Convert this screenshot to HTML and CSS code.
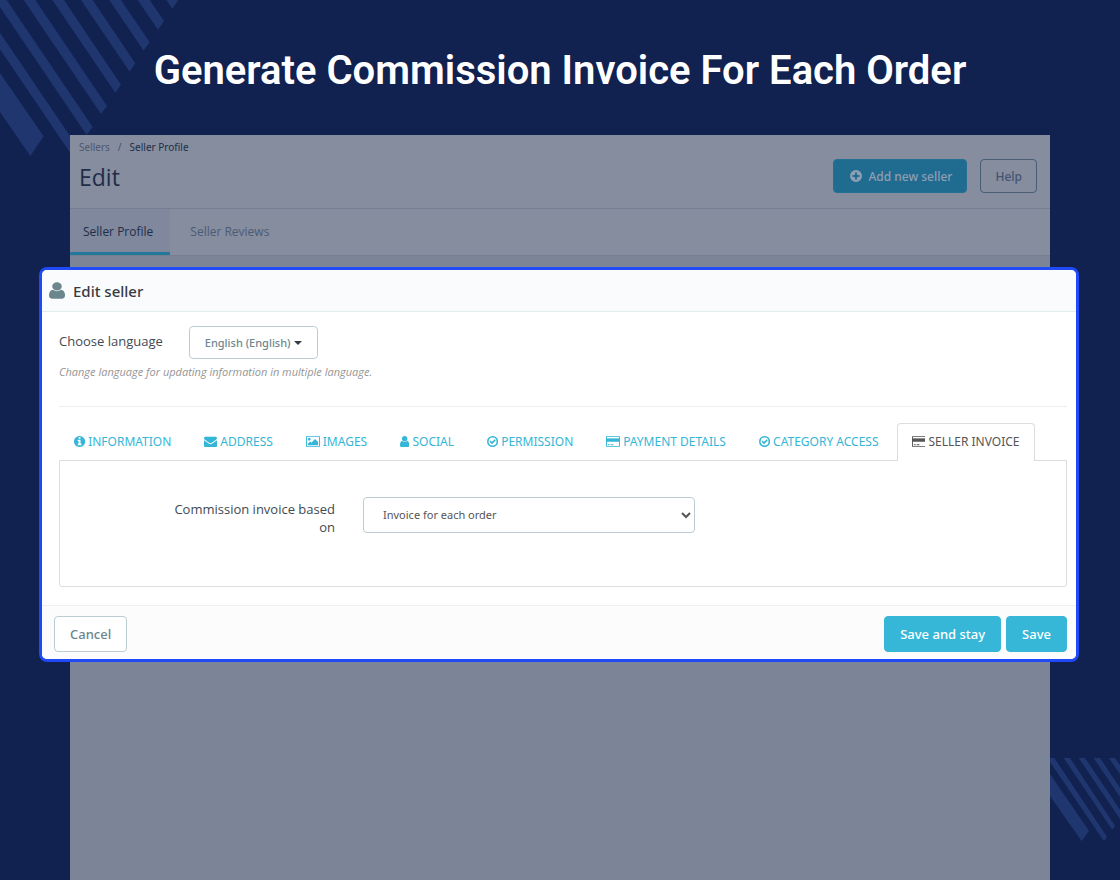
FILE: index.html
```html
<!DOCTYPE html>
<html lang="en">
  <head>
    <meta charset="utf-8">
    <title>Generate Commission Invoice For Each Order</title>
    <link rel="stylesheet" href="styles.css">
  </head>
  <body>
    <!-- corner stripes -->
    <svg class="stripes stripes-top" viewBox="0 0 540 480" aria-hidden="true">
      <path d="M0 219 131 409 91 468 0 336zM0 98 235 445 217 468 0 148zM0 0H20L278 381 260 405 0 21zM71 0H106L321 318 303 342zM157 0H192L363 254 346 278zM243 0H278L406 190 389 215zM328 0H363L449 127 431 152zM413 0H449L492 63 474 89zM499 0H535L517 26z"/>
    </svg>
    <svg class="stripes stripes-bottom" viewBox="0 0 210 255" aria-hidden="true">
      <path d="M0 48 117 218 95 250 0 114zM0 0H13L171 236 162 250 0 12zM41 0H60L195 203 187 216zM86 0H105L210 155V183zM131 0H150L210 89V117zM177 0H195L210 22V49z"/>
    </svg>

    <h1>Generate Commission Invoice For Each Order</h1>

    <main class="stage">
      <div class="page">
        <header class="page-head">
          <div>
            <nav class="breadcrumb">
              <a href="#">Sellers</a><span>/</span><a href="#" class="current">Seller Profile</a>
            </nav>
            <h2>Edit</h2>
          </div>
          <div class="page-actions">
            <button type="button" class="btn-add">
              <svg class="icon-plus" viewBox="0 0 12 12" aria-hidden="true">
                <path fill-rule="evenodd" d="M6 0a6 6 0 1 1 0 12a6 6 0 1 1 0-12zM5 2.500V5H2.500V7H5V9.500H7V7H9.500V5H7V2.500z"/>
              </svg>
              Add new seller
            </button>
            <button type="button" class="btn-help">Help</button>
          </div>
        </header>
        <nav class="page-tabs">
          <a href="#" class="active">Seller Profile</a>
          <a href="#">Seller Reviews</a>
        </nav>
      </div>

      <form class="modal">
        <div class="modal-head">
          <svg class="icon-head" viewBox="256 0 1280 1792" preserveAspectRatio="none" aria-hidden="true"><use href="#user"/></svg>
          <h3>Edit seller</h3>
        </div>

        <div class="modal-body">
          <div class="language">
            <label for="language">Choose language</label>
            <button type="button" id="language">English (English)<span class="caret"></span></button>
          </div>
          <p class="hint">Change language for updating information in multiple language.</p>
          <hr>

          <nav class="tabs">
            <a href="#">
              <svg viewBox="128 0 1536 1792" aria-hidden="true"><path d="M1152 1376v-160q0-14-9-23t-23-9h-96v-512q0-14-9-23t-23-9h-320q-14 0-23 9t-9 23v160q0 14 9 23t23 9h96v320h-96q-14 0-23 9t-9 23v160q0 14 9 23t23 9h448q14 0 23-9t9-23zm-128-896v-160q0-14-9-23t-23-9h-192q-14 0-23 9t-9 23v160q0 14 9 23t23 9h192q14 0 23-9t9-23zm640 416q0 209-103 385.500t-279.500 279.500-385.500 103-385.500-103-279.500-279.500-103-385.500 103-385.500 279.500-279.500 385.500-103 385.500 103 279.500 279.500 103 385.500z"/></svg>
              INFORMATION
            </a>
            <a href="#">
              <svg viewBox="0 0 1792 1792" aria-hidden="true"><path d="M1792 710v794q0 66-47 113t-113 47h-1472q-66 0-113-47t-47-113v-794q44 49 101 87 362 246 497 345 57 42 92.500 65.500t94.500 48 110 24.500h2q51 0 110-24.500t94.500-48 92.500-65.500q170-123 498-345 57-39 100-87zm0-294q0 79-49 151t-122 123q-376 261-468 325-10 7-42.500 31t-54 38.500-52 32.500-57.500 27-50 9h-2q-23 0-50-9t-57.500-27-52-32.500-54-38.500-42.500-31q-91-64-262-182.500t-205-142.500q-62-42-117-115.500t-55-136.500q0-78 41.500-130t118.500-52h1472q65 0 112.500 47t47.500 113z"/></svg>
              ADDRESS
            </a>
            <a href="#">
              <svg viewBox="64 0 1920 1792" aria-hidden="true"><path d="M704 576q0 80-56 136t-136 56-136-56-56-136 56-136 136-56 136 56 56 136zm1024 384v448h-1408v-192l320-320 160 160 512-512zm96-704h-1600q-13 0-22.500 9.500t-9.500 22.500v1216q0 13 9.500 22.500t22.500 9.500h1600q13 0 22.500-9.500t9.500-22.500v-1216q0-13-9.500-22.500t-22.500-9.500zm160 32v1216q0 66-47 113t-113 47h-1600q-66 0-113-47t-47-113v-1216q0-66 47-113t113-47h1600q66 0 113 47t47 113z"/></svg>
              IMAGES
            </a>
            <a href="#">
              <svg viewBox="256 0 1280 1792" aria-hidden="true"><path id="user" d="M1536 1399q0 109-62.500 187t-150.500 78h-854q-88 0-150.500-78t-62.500-187q0-85 8.500-160.500t31.500-152 58.500-131 94-89 134.500-34.500q131 128 313 128t313-128q76 0 134.500 34.500t94 89 58.500 131 31.500 152 8.500 160.500zm-256-887q0 159-112.500 271.500t-271.500 112.500-271.500-112.500-112.500-271.500 112.500-271.500 271.500-112.500 271.500 112.500 112.500 271.500z"/></svg>
              SOCIAL
            </a>
            <a href="#">
              <svg viewBox="128 0 1536 1792" aria-hidden="true"><g id="check" fill="none" stroke="currentColor" stroke-width="224"><circle cx="896" cy="896" r="656"/><path d="M560 850 820 1110 1260 670"/></g></svg>
              PERMISSION
            </a>
            <a href="#">
              <svg viewBox="0 0 1920 1792" aria-hidden="true"><path id="card" d="M1760 128q66 0 113 47t47 113v1216q0 66-47 113t-113 47h-1600q-66 0-113-47t-47-113v-1216q0-66 47-113t113-47h1600zm-1600 128q-13 0-22.500 9.500t-9.500 22.500v224h1664v-224q0-13-9.500-22.500t-22.500-9.500h-1600zm1600 1280q13 0 22.500-9.500t9.500-22.500v-608h-1664v608q0 13 9.500 22.500t22.500 9.500h1600zm-1504-128v-128h256v128h-256zm384 0v-128h384v128h-384z"/><path id="stripe" d="M64 480H1856V896H64z"/></svg>
              PAYMENT DETAILS
            </a>
            <a href="#">
              <svg viewBox="128 0 1536 1792" aria-hidden="true"><use href="#check"/></svg>
              CATEGORY ACCESS
            </a>
            <a href="#" class="active">
              <svg viewBox="0 0 1920 1792" aria-hidden="true"><use href="#card"/><use href="#stripe"/></svg>
              SELLER INVOICE
            </a>
          </nav>

          <div class="tab-content">
            <label for="invoice">Commission invoice based on</label>
            <select id="invoice">
              <option>Invoice for each order</option>
            </select>
          </div>
        </div>

        <div class="modal-foot">
          <button type="button" class="btn-cancel">Cancel</button>
          <button type="submit" class="btn-save">Save and stay</button>
          <button type="submit" class="btn-save">Save</button>
        </div>
      </form>
    </main>
  </body>
</html>
```

FILE: styles.css
```css
* {
  box-sizing: border-box;
}
body {
  margin: 0;
  min-height: 100vh;
  display: flex;
  flex-direction: column;
  position: relative;
  background-color: #112150;
  font-family: "Open Sans", sans-serif;
}
h1, h2, h3, p {
  margin: 0;
}
a {
  text-decoration: none;
}
button, select, h3, .tabs, .breadcrumb {
  font-family: "Noto Sans", sans-serif;
}
button, select {
  border-radius: 4px;
}
svg {
  fill: currentColor;
}

h1 {
  padding: 47px 16px 40px;
  position: relative;
  color: white;
  font-family: Roboto, sans-serif;
  font-size: 40px;
  font-weight: 600;
  line-height: 48px;
  text-align: center;
}

.stripes {
  position: absolute;
  color: #20366f;
}
.stripes-top {
  top: 0;
  left: 0;
  width: 180px;
}
.stripes-bottom {
  right: 0;
  bottom: 37px;
  width: 70px;
}

.stage {
  flex: 1;
  display: flex;
  position: relative;
  margin: 0 70px;
}

/* dimmed page behind the dialog */
.page {
  flex: 1;
  background-color: #7c8498;
}
.page-head {
  display: flex;
  justify-content: space-between;
  height: 74px;
  padding: 0 13px 0 9px;
  background-color: #858d9f;
  border-bottom: 1px solid #747d92;
}
.breadcrumb {
  display: flex;
  gap: 8px;
  padding-top: 4px;
  font-size: 10px;
  line-height: 16px;
  color: #465168;
}
.breadcrumb a {
  color: #4d586f;
}
.breadcrumb .current, .page-tabs .active {
  color: #212d48;
}
h2 {
  color: #212d48;
  font-size: 23px;
  font-weight: 400;
  line-height: 44px;
}
.page-actions {
  display: flex;
  gap: 13px;
  padding-top: 24px;
}
.page-actions button {
  height: 34px;
  font-size: 12px;
  font-weight: 500;
}
.btn-add {
  display: flex;
  align-items: center;
  gap: 6px;
  padding: 0 14px 0 16px;
  color: #8f9eb2;
  background-color: #206b90;
  border: 1px solid #246f94;
}
.icon-plus {
  width: 12px;
}
.btn-help {
  padding: 0 14px;
  color: #44546f;
  background: none;
  border: 1px solid #495d75;
}
.page-tabs {
  display: flex;
  gap: 7px;
  height: 47px;
  background-color: #858d9f;
  border-bottom: 1px solid #747d92;
}
.page-tabs a {
  padding: 0 17px 0 13px;
  color: #4b5b76;
  font-size: 12px;
  line-height: 45px;
}
.page-tabs .active {
  background-color: #7f889d;
  border-bottom: 3px solid #217a9c;
}

.modal {
  position: absolute;
  top: 132px;
  left: -31px;
  right: -29px;
  background-color: white;
  border: 3px solid #1f4af5;
  border-radius: 8px;
  overflow: hidden;
}
.modal-head {
  display: flex;
  align-items: center;
  gap: 8px;
  height: 42px;
  padding-left: 7px;
  background-color: #fafbfd;
  border-bottom: 1px solid #e3ecee;
}
.icon-head {
  width: 16px;
  height: 19px;
  color: #6c868e;
}
h3 {
  color: #363a41;
  font-size: 15px;
  font-weight: 500;
  line-height: 20px;
}
.modal-body {
  padding: 14px 9px 18px 17px;
}
.language {
  display: flex;
  gap: 26px;
}
label {
  color: #414a52;
  font-size: 13px;
  line-height: 18px;
}
.language label {
  padding-top: 6px;
}
.language button {
  display: flex;
  align-items: center;
  gap: 3px;
  height: 33px;
  padding: 0 15px;
  color: #6c868e;
  background-color: white;
  border: 1px solid #bbcdd2;
  font-size: 11px;
  font-weight: 500;
}
.caret {
  border: 4px solid transparent;
  border-top-color: #363a41;
  border-bottom: none;
}
.hint {
  padding-top: 5px;
  color: #959595;
  font-size: 11px;
  font-style: italic;
  line-height: 16px;
}
hr {
  margin: 26px 0 16px;
  border: none;
  border-top: 1px solid #eee;
}

.tabs {
  display: flex;
  gap: 3px;
  margin-bottom: -1px;
}
.tabs a {
  display: flex;
  align-items: center;
  gap: 3px;
  height: 38px;
  padding: 0 14px 2px;
  border: 1px solid transparent;
  border-bottom: none;
  color: #34b6d6;
  font-size: 12px;
  white-space: nowrap;
}
.tabs svg {
  height: 13px;
}
.tabs a.active {
  position: relative;
  color: #555;
  background-color: white;
  border-color: #ddd;
  border-radius: 4px 4px 0 0;
}
.tab-content {
  display: flex;
  align-items: flex-start;
  gap: 28px;
  min-height: 127px;
  padding-top: 36px;
  border: 1px solid #ddd;
  border-radius: 0 0 3px 3px;
}
.tab-content label {
  width: 275px;
  padding: 3px 0 0 100px;
  text-align: right;
}
.tab-content select {
  width: 33%;
  height: 36px;
  padding: 0 0 1px 15px;
  color: #555;
  background-color: white;
  border: 1px solid #bbcdd2;
  font-size: 11px;
}

.modal-foot {
  display: flex;
  gap: 5px;
  padding: 10px 9px 7px 12px;
  background-color: #fcfcfc;
  border-top: 1px solid #eee;
}
.modal-foot button {
  height: 36px;
  padding: 0 15px;
  border: 1px solid #36b7d7;
  font-size: 13px;
  font-weight: 500;
}
.modal-foot .btn-cancel {
  margin-right: auto;
  color: #6c868e;
  background-color: white;
  border-color: #bbcdd2;
}
.modal-foot .btn-save {
  color: white;
  background-color: #36b7d7;
}
```
